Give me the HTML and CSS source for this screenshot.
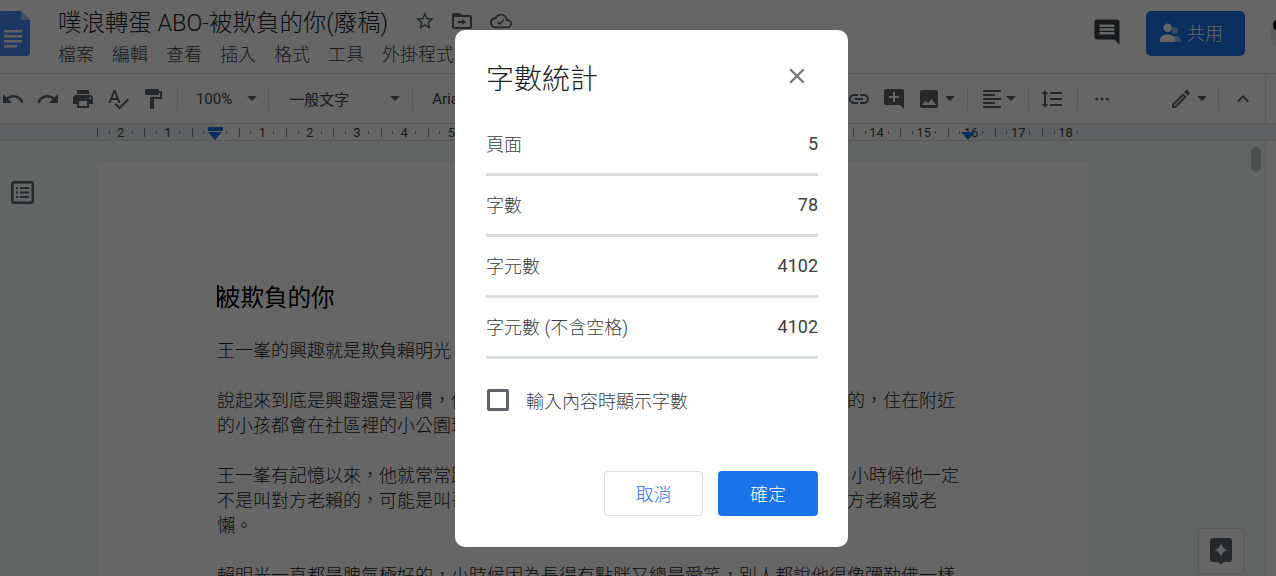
FILE: index.html
```html
<!DOCTYPE html>
<html lang="zh-Hant">
<head>
  <meta charset="UTF-8" />
  <title>字數統計</title>
  <link rel="stylesheet" href="styles.css">
</head>
<body>
  <div class="app">
    <!-- Title bar -->
    <header class="titlebar">
      <svg class="doc-logo" viewBox="0 0 31 45"><path class="logo-body" d="M3 0h19l9 9v33a3 3 0 0 1-3 3H3a3 3 0 0 1-3-3V3a3 3 0 0 1 3-3z"/><path class="logo-fold" d="M22 0l9 9h-9z"/><path class="logo-lines" d="M5 19h18v2.4H5zM5 24h18v2.4H5zM5 29h18v2.4H5zM5 34h13v2.4H5z"/></svg>
      <div class="doc-head">
        <div class="doc-name-row">
          <span class="doc-name">噗浪轉蛋 ABO-被欺負的你(廢稿)</span>
          <svg class="icon star" viewBox="0 0 24 24"><path d="M22 9.24l-7.19-.62L12 2 9.19 8.63 2 9.24l5.46 4.73L5.82 21 12 17.27 18.18 21l-1.63-7.03L22 9.24zM12 15.4l-3.76 2.27 1-4.28-3.32-2.88 4.38-.38L12 6.1l1.71 4.04 4.38.38-3.32 2.88 1 4.28L12 15.4z"/></svg>
          <svg class="icon move" viewBox="0 0 24 24"><path d="M20 6h-8l-2-2H4c-1.1 0-2 .9-2 2v12c0 1.1.9 2 2 2h16c1.1 0 2-.9 2-2V8c0-1.1-.9-2-2-2zm0 12H4V8h16v10zm-8-2v-2H8v-2h4v-2l4 3-4 3z"/></svg>
          <svg class="icon cloud" viewBox="0 0 24 24"><path d="M19.35 10.04C18.67 6.59 15.64 4 12 4 9.11 4 6.6 5.64 5.35 8.04 2.34 8.36 0 10.91 0 14c0 3.31 2.69 6 6 6h13c2.76 0 5-2.24 5-5 0-2.64-2.05-4.78-4.65-4.96zM19 18H6c-2.21 0-4-1.79-4-4s1.79-4 4-4h.71C7.37 7.69 9.48 6 12 6c3.04 0 5.5 2.46 5.5 5.5v.5H19c1.66 0 3 1.34 3 3s-1.34 3-3 3zm-8.5-1.5l-2.8-2.8 1.1-1.1 1.7 1.7 4.2-4.2 1.1 1.1z"/></svg>
        </div>
        <nav class="menu">
          <span>檔案</span><span>編輯</span><span>查看</span><span>插入</span><span>格式</span><span>工具</span><span>外掛程式</span>
        </nav>
      </div>
      <svg class="icon comments" viewBox="0 0 24 24"><path d="M20 2H4c-1.1 0-2 .9-2 2v12c0 1.1.9 2 2 2h14l4 4V4c0-1.1-.9-2-2-2zm-2 12H6v-2h12v2zm0-3H6V9h12v2zm0-3H6V6h12v2z"/></svg>
      <button class="share-btn">
        <svg class="share-icon" viewBox="0 0 22 20"><circle class="person-back" cx="15.5" cy="8" r="3.4"/><path class="person-back" d="M12 20c0-4 2-6.500 4-6.500 3 0 6 2 6 4.500v2z"/><circle cx="8" cy="5" r="4.400"/><path d="M0 20v-3c0-3 4-5 8-5s8 2 8 5v3z"/></svg>
        共用
      </button>
      <div class="avatar"><span class="avatar-hair"></span></div>
    </header>

    <!-- Toolbar -->
    <div class="toolbar">
      <div class="tb-group tb-left">
        <span class="tb-btn"><svg viewBox="0 0 24 24"><path d="M12.5 8c-2.65 0-5.05.99-6.9 2.6L2 7v9h9l-3.62-3.62c1.39-1.16 3.16-1.88 5.12-1.88 3.54 0 6.55 2.31 7.6 5.5l2.37-.78C21.08 11.03 17.15 8 12.5 8z"/></svg></span>
        <span class="tb-btn"><svg viewBox="0 0 24 24"><path d="M18.4 10.6C16.55 8.99 14.15 8 11.5 8c-4.65 0-8.58 3.03-9.96 7.22L3.9 16c1.05-3.19 4.05-5.5 7.6-5.5 1.95 0 3.73.72 5.12 1.88L13 16h9V7l-3.6 3.6z"/></svg></span>
        <span class="tb-btn"><svg viewBox="0 0 24 24"><path d="M19 8H5c-1.66 0-3 1.34-3 3v6h4v4h12v-4h4v-6c0-1.66-1.34-3-3-3zm-3 11H8v-5h8v5zm3-7c-.55 0-1-.45-1-1s.45-1 1-1 1 .45 1 1-.45 1-1 1zm-1-9H6v4h12V3z"/></svg></span>
        <span class="tb-btn"><svg viewBox="0 0 24 24"><path d="M12.45 16h2.09L9.43 3H7.57L2.46 16h2.09l1.12-3h5.64l1.14 3zm-6.02-5L8.5 5.48 10.57 11H6.43zm15.16.59l-8.09 8.09L9.83 16l-1.41 1.41 5.09 5.09L23 13l-1.41-1.41z"/></svg></span>
        <span class="tb-btn"><svg viewBox="0 0 24 24"><path d="M18 4V3c0-.55-.45-1-1-1H5c-.55 0-1 .45-1 1v4c0 .55.45 1 1 1h12c.55 0 1-.45 1-1V6h1v4H9v11c0 .55.45 1 1 1h2c.55 0 1-.45 1-1v-9h8V4h-3z"/></svg></span>
        <span class="tb-sep sep-paint"></span>
        <span class="tb-text zoom-level">100%</span>
        <span class="tb-caret caret-zoom"></span>
        <span class="tb-sep sep-zoom"></span>
        <span class="tb-text style-name">一般文字</span>
        <span class="tb-caret caret-style"></span>
        <span class="tb-sep sep-style"></span>
        <span class="tb-text font-name">Arial</span>
      </div>
      <div class="tb-group tb-right">
        <span class="tb-btn"><svg viewBox="0 0 24 24"><path d="M3.9 12c0-1.71 1.39-3.1 3.1-3.1h4V7H7c-2.76 0-5 2.24-5 5s2.24 5 5 5h4v-1.900H7c-1.710 0-3.100-1.390-3.100-3.100zM8 13h8v-2H8v2zm9-6h-4v1.900h4c1.710 0 3.100 1.390 3.100 3.100s-1.390 3.100-3.100 3.100h-4V17h4c2.760 0 5-2.240 5-5s-2.240-5-5-5z"/></svg></span>
        <span class="tb-btn"><svg viewBox="0 0 24 24"><path d="M22 4c0-1.100-.9-2-2-2H4c-1.100 0-2 .9-2 2v12c0 1.100.9 2 2 2h14l4 4V4zm-5 7h-4v4h-2v-4H7V9h4V5h2v4h4v2z"/></svg></span>
        <span class="tb-btn"><svg viewBox="0 0 24 24"><path d="M21 19V5c0-1.100-.9-2-2-2H5c-1.100 0-2 .9-2 2v14c0 1.100.9 2 2 2h14c1.100 0 2-.9 2-2zM8.500 13.500l2.500 3.010L14.500 12l4.500 6H5l3.500-4.500z"/></svg></span>
        <span class="tb-caret caret-tight"></span>
        <span class="tb-sep sep-image"></span>
        <span class="tb-btn tb-btn-small sep-gap-12"><svg viewBox="0 0 24 24"><path d="M15 15H3v2h12v-2zm0-8H3v2h12V7zM3 13h18v-2H3v2zm0 8h18v-2H3v2zM3 3v2h18V3H3z"/></svg></span>
        <span class="tb-caret"></span>
        <span class="tb-sep sep-align"></span>
        <span class="tb-btn sep-gap-6"><svg viewBox="0 0 24 24"><path d="M6 7h2.500L5 3.500 1.500 7H4v10H1.500L5 20.500 8.500 17H6V7zm4-2v2h12V5H10zm0 14h12v-2H10v2zm0-6h12v-2H10v2z"/></svg></span>
        <span class="tb-sep sep-line"></span>
        <span class="tb-btn sep-gap-6"><svg class="more-dots" viewBox="0 0 24 24"><circle cx="5" cy="12" r="2"/><circle cx="12" cy="12" r="2"/><circle cx="19" cy="12" r="2"/></svg></span>
        <span class="tb-btn pen-btn"><svg viewBox="0 0 24 24"><path d="M14.060 9.020l.92.92L5.920 19H5v-.92l9.060-9.060M17.660 3c-.25 0-.51.1-.7.29l-1.830 1.830 3.750 3.750 1.830-1.830c.39-.39.39-1.020 0-1.410l-2.340-2.340c-.2-.2-.45-.29-.71-.29zm-3.600 3.190L3 17.250V21h3.750L17.810 9.940l-3.750-3.750z"/></svg></span>
        <span class="tb-caret caret-pen"></span>
        <span class="tb-sep sep-pen"></span>
        <span class="tb-btn sep-gap-6"><svg class="chevron" viewBox="0 0 24 24"><path d="M12 8l-6 6 1.410 1.410L12 10.830l4.590 4.580L18 14z"/></svg></span>
      </div>
    </div>

    <!-- Ruler -->
    <div class="ruler">
      <div class="ruler-scale">
        <span>2</span><span>1</span><span></span><span>1</span><span>2</span><span>3</span><span>4</span><span>5</span><span>6</span><span>7</span><span>8</span><span>9</span><span>10</span><span>11</span><span>12</span><span>13</span><span>14</span><span>15</span><span>16</span><span>17</span><span>18</span>
      </div>
      <span class="indent-bar"></span>
      <span class="indent-left"></span>
      <span class="indent-right"></span>
    </div>

    <!-- Document -->
    <main class="canvas">
      <svg class="toc-icon" viewBox="0 0 23 23"><rect x="1.250" y="1.250" width="20.500" height="20.500" rx="2" /><path d="M5 6h2v2H5zM9 6h9v2H9zM5 10.500h2v2H5zM9 10.500h9v2H9zM5 15h2v2H5zM9 15h9v2H9z"/></svg>
      <article class="page">
        <h1 class="page-title"><span class="text-cursor"></span>被欺負的你</h1>
        <p>王一峯的興趣就是欺負賴明光</p>
        <p>說起來到底是興趣還是習慣，他們兩家住得很近，從小一起上學一起長大也是真的，住在附近<br>的小孩都會在社區裡的小公園玩</p>
        <p>王一峯有記憶以來，他就常常跟賴明光玩在一起，至於一開始是怎麼叫他的呢， 小時候他一定<br>不是叫對方老賴的，可能是叫哥哥或是弟弟吧，現在每天只是覺得好玩才會叫對方老賴或老<br>懶。</p>
        <p>賴明光一直都是脾氣極好的，小時候因為長得有點胖又總是愛笑，別人都說他很像彌勒佛一樣</p>
      </article>
      <span class="scroll-thumb"></span>
      <span class="explore-btn">
        <svg viewBox="0 0 22 26"><path d="M3 0h16a3 3 0 0 1 3 3v18a3 3 0 0 1-3 3h-5l-3 2.500L8 24H3a3 3 0 0 1-3-3V3a3 3 0 0 1 3-3z"/><path class="spark" d="M11 4.500c.8 4 2.500 6.500 6.500 7.500-4 1-5.700 3.500-6.500 7.500-.8-4-2.500-6.500-6.500-7.500 4-1 5.700-3.500 6.500-7.500z"/></svg>
      </span>
    </main>
  </div>

  <!-- Word count dialog -->
  <div class="scrim">
    <section class="dialog" aria-label="字數統計">
      <div class="dialog-head">
        <h2>字數統計</h2>
        <svg class="dialog-close" viewBox="0 0 24 24"><path d="M19 6.410L17.590 5 12 10.590 6.410 5 5 6.410 10.590 12 5 17.590 6.410 19 12 13.410 17.590 19 19 17.590 13.410 12z"/></svg>
      </div>
      <div class="stat-row"><span class="stat-label">頁面</span><span class="stat-num">5</span></div>
      <div class="stat-row"><span class="stat-label">字數</span><span class="stat-num">78</span></div>
      <div class="stat-row"><span class="stat-label">字元數</span><span class="stat-num">4102</span></div>
      <div class="stat-row"><span class="stat-label">字元數 (不含空格)</span><span class="stat-num">4102</span></div>
      <label class="check-row">
        <span class="checkbox"></span>
        <span class="stat-label">輸入內容時顯示字數</span>
      </label>
      <div class="dialog-actions">
        <button class="btn btn-cancel">取消</button>
        <button class="btn btn-ok">確定</button>
      </div>
    </section>
  </div>
</body>
</html>
```
FILE: styles.css
```css
:root {
  --cjk: "Roboto", "Noto Sans CJK TC", sans-serif;
  --icon: #5f6368;
  --line: #dadce0;
  --blue: #1a73e8;
}
* { box-sizing: border-box; }
html, body {
  margin: 0;
  height: 576px;
  overflow: hidden;
}
body {
  font-family: var(--cjk);
  font-weight: 300;
  color: #3c4043;
  background: #fff;
}
.app {
  height: 576px;
  display: flex;
  flex-direction: column;
  overflow: hidden;
}

/* title bar */
.titlebar {
  height: 74px;
  flex: none;
  display: flex;
  align-items: flex-start;
  border-bottom: 1px solid var(--line);
}
.doc-logo {
  width: 31px;
  height: 45px;
  margin: 11px 0 0 -1px;
  flex: none;
}
.logo-body { fill: #4a8af5; }
.logo-fold { fill: #a1c2fa; }
.logo-lines { fill: #f1f1f1; }
.doc-head {
  margin-left: 28px;
  flex: 1;
}
.doc-name-row {
  display: flex;
  align-items: center;
  height: 24px;
  margin-top: 9px;
  white-space: nowrap;
}
.doc-name {
  font-size: 23.450px;
  color: #202124;
  width: 356px;
}
.icon {
  width: 24px;
  height: 24px;
  fill: var(--icon);
  flex: none;
}
.star { width: 22px; height: 22px; }
.move { margin-left: 14px; }
.cloud { margin-left: 16px; width: 22px; height: 22px; }
.menu {
  display: flex;
  gap: 18px;
  margin-top: 9px;
  font-size: 18px;
  line-height: 26px;
  color: #3c4043;
}
.comments {
  width: 30px;
  height: 30px;
  margin: 17px 24px 0 0;
  fill: #3c4043;
}
.share-btn {
  width: 99px;
  height: 45px;
  margin-top: 11px;
  display: flex;
  align-items: center;
  padding: 0 0 3px 14px;
  gap: 6px;
  border: 0;
  border-radius: 5px;
  background: var(--blue);
  color: #fff;
  font: 300 18px var(--cjk);
}
.share-icon {
  width: 21px;
  height: 19px;
  fill: #fff;
}
.person-back { opacity: 0.5; }
.avatar {
  width: 40px;
  height: 40px;
  margin: 13px -34px 0 25px;
  border-radius: 50%;
  background: #e8e8e8;
  flex: none;
  overflow: hidden;
}
.avatar-hair {
  display: block;
  width: 20px;
  height: 16px;
  margin: 4px 0 0 3px;
  border-radius: 50%;
  background: #111;
}

/* toolbar */
.toolbar {
  height: 50px;
  flex: none;
  display: flex;
  align-items: center;
  justify-content: space-between;
  padding: 0 15.400px 0 0;
  border-bottom: 1px solid var(--line);
  position: relative;
}
.toolbar::after {
  content: "";
  position: absolute;
  right: 10px;
  top: 0;
  bottom: 0;
  width: 1px;
  background: var(--line);
}
.tb-group {
  display: flex;
  align-items: center;
}
.tb-left { margin-left: -5px; }
.tb-btn {
  width: 35.200px;
  height: 24px;
  flex: none;
  display: flex;
  align-items: center;
  justify-content: center;
}
.tb-btn svg {
  width: 24px;
  height: 24px;
  fill: var(--icon);
}
.tb-btn .more-dots {
  width: 18px;
  height: 18px;
}
.tb-btn-small { width: 24px; }
.tb-sep {
  width: 1px;
  height: 24px;
  flex: none;
  background: var(--line);
}
.tb-caret {
  width: 14px;
  height: 6px;
  flex: none;
  display: flex;
  justify-content: center;
}
.tb-caret::before {
  content: "";
  border-left: 5px solid transparent;
  border-right: 5px solid transparent;
  border-top: 5px solid var(--icon);
}
.tb-text {
  white-space: nowrap;
  color: #3c4043;
  font-size: 15px;
  font-weight: 400;
}
.sep-paint { margin-left: 6px; }
.zoom-level { margin-left: 18px; }
.caret-zoom { margin-left: 13px; }
.sep-zoom { margin-left: 9px; }
.style-name { margin-left: 20px; }
.caret-style { margin-left: 39px; }
.sep-style { margin-left: 10px; }
.font-name { margin-left: 19px; }
.caret-tight { margin-left: -4px; }
.sep-image { margin-left: 10px; }
.sep-gap-12 { margin-left: 12px; }
.sep-align { margin-left: 10px; }
.sep-gap-6 { margin-left: 6px; }
.sep-line { margin-left: 7px; }
.pen-btn { margin-left: 44px; }
.caret-pen { margin-left: -3px; }
.sep-pen { margin-left: 9px; }

/* ruler */
.ruler {
  height: 17px;
  flex: none;
  position: relative;
  border-bottom: 1px solid var(--line);
  background: linear-gradient(to right, #eef0f3 215px, #fff 215px, #fff 968px, #eef0f3 968px);
}
.ruler-scale {
  display: flex;
  margin-left: 97px;
  width: 993px;
}
.ruler-scale span {
  width: 47.260px;
  flex: none;
  height: 16px;
  text-align: center;
  font-size: 13px;
  font-weight: 400;
  line-height: 17px;
  color: #3c4043;
  background-image:
    linear-gradient(#80868b, #80868b),
    linear-gradient(#80868b, #80868b),
    linear-gradient(#80868b, #80868b);
  background-repeat: no-repeat;
  background-size: 1px 9px, 1px 3px, 1px 3px;
  background-position: 0 4px, 25% 7px, 75% 7px;
}
.indent-bar {
  position: absolute;
  left: 208px;
  top: 3px;
  width: 15px;
  height: 4px;
  background: var(--blue);
}
.indent-left,
.indent-right {
  position: absolute;
  top: 8px;
  width: 0;
  height: 0;
  border-left: 7px solid transparent;
  border-right: 7px solid transparent;
  border-top: 8px solid var(--blue);
}
.indent-left { left: 208px; }
.indent-right { left: 961px; }

/* document */
.canvas {
  flex: 1;
  position: relative;
  display: flex;
  align-items: flex-start;
  padding-top: 21px;
  background: #f8f9fa;
  overflow: hidden;
  border-right: 1px solid var(--line);
  margin-right: 10px;
}
.toc-icon {
  width: 23px;
  height: 23px;
  flex: none;
  margin: 19px 0 0 11px;
  fill: var(--icon);
}
.toc-icon rect {
  fill: none;
  stroke: var(--icon);
  stroke-width: 2.500;
}
.page {
  width: 992px;
  height: 600px;
  margin-left: 63px;
  padding: 118px 120px 0;
  background: #fff;
  box-shadow: 0 0 0 1px #f1f3f4;
  font-family: "Noto Sans CJK TC", sans-serif;
  font-size: 18px;
  line-height: 25px;
  color: #222;
  flex: none;
  white-space: nowrap;
}
.page-title {
  margin: 0 0 25px;
  font-size: 23.500px;
  line-height: 32px;
  font-weight: 400;
  color: #000;
  position: relative;
}
.text-cursor {
  position: absolute;
  left: 0;
  top: 5px;
  width: 2px;
  height: 22px;
  background: #000;
}
.page p { margin: 0 0 25px; }
.scroll-thumb {
  position: absolute;
  left: 1251px;
  top: 6px;
  width: 10px;
  height: 25px;
  border-radius: 5px;
  background: #c4c7cc;
}
.explore-btn {
  position: absolute;
  left: 1198px;
  top: 387px;
  width: 46px;
  height: 46px;
  display: flex;
  align-items: center;
  justify-content: center;
  background: #fff;
  border: 1px solid var(--line);
  border-radius: 3px;
}
.explore-btn svg {
  width: 22px;
  height: 26px;
  fill: #5f6368;
}
.explore-btn .spark { fill: #fff; }

/* dialog */
.scrim {
  position: fixed;
  inset: 0;
  background: rgba(0, 0, 0, 0.6);
  padding: 30px 0 0 455px;
}
.dialog {
  width: 393px;
  height: 517px;
  padding: 30px 30px 31px 31px;
  background: #fff;
  border-radius: 10px;
  display: flex;
  flex-direction: column;
  font-size: 18px;
  color: #3c4043;
}
.dialog-head {
  display: flex;
  justify-content: space-between;
  align-items: center;
  height: 38px;
  margin-bottom: 17px;
}
.dialog-head h2 {
  margin: 2px 0 0;
  font-size: 28px;
  font-weight: 300;
  line-height: 38px;
  color: #202124;
}
.dialog-close {
  width: 26px;
  height: 26px;
  margin: -6px 8px 0 0;
  fill: #757575;
}
.stat-row {
  height: 61px;
  flex: none;
  display: flex;
  justify-content: space-between;
  align-items: center;
  padding-bottom: 2px;
  border-bottom: 3px solid var(--line);
}
.stat-label { font-weight: 300; }
.stat-num {
  font-weight: 400;
  color: #3c4043;
}
.check-row {
  display: flex;
  align-items: center;
  gap: 17px;
  margin: 28px 0 0 1px;
  height: 26px;
}
.checkbox {
  width: 22px;
  height: 22px;
  flex: none;
  border: 3px solid #5f6368;
  border-radius: 2px;
}
.dialog-actions {
  margin-top: auto;
  display: flex;
  justify-content: flex-end;
  gap: 15px;
}
.btn {
  height: 45px;
  width: 99px;
  border-radius: 4px;
  font: 300 18px var(--cjk);
  padding: 0 0 2px;
}
.btn-cancel {
  background: #fff;
  border: 1px solid var(--line);
  color: var(--blue);
}
.btn-ok {
  width: 100px;
  background: var(--blue);
  border: 0;
  color: #fff;
}
```
